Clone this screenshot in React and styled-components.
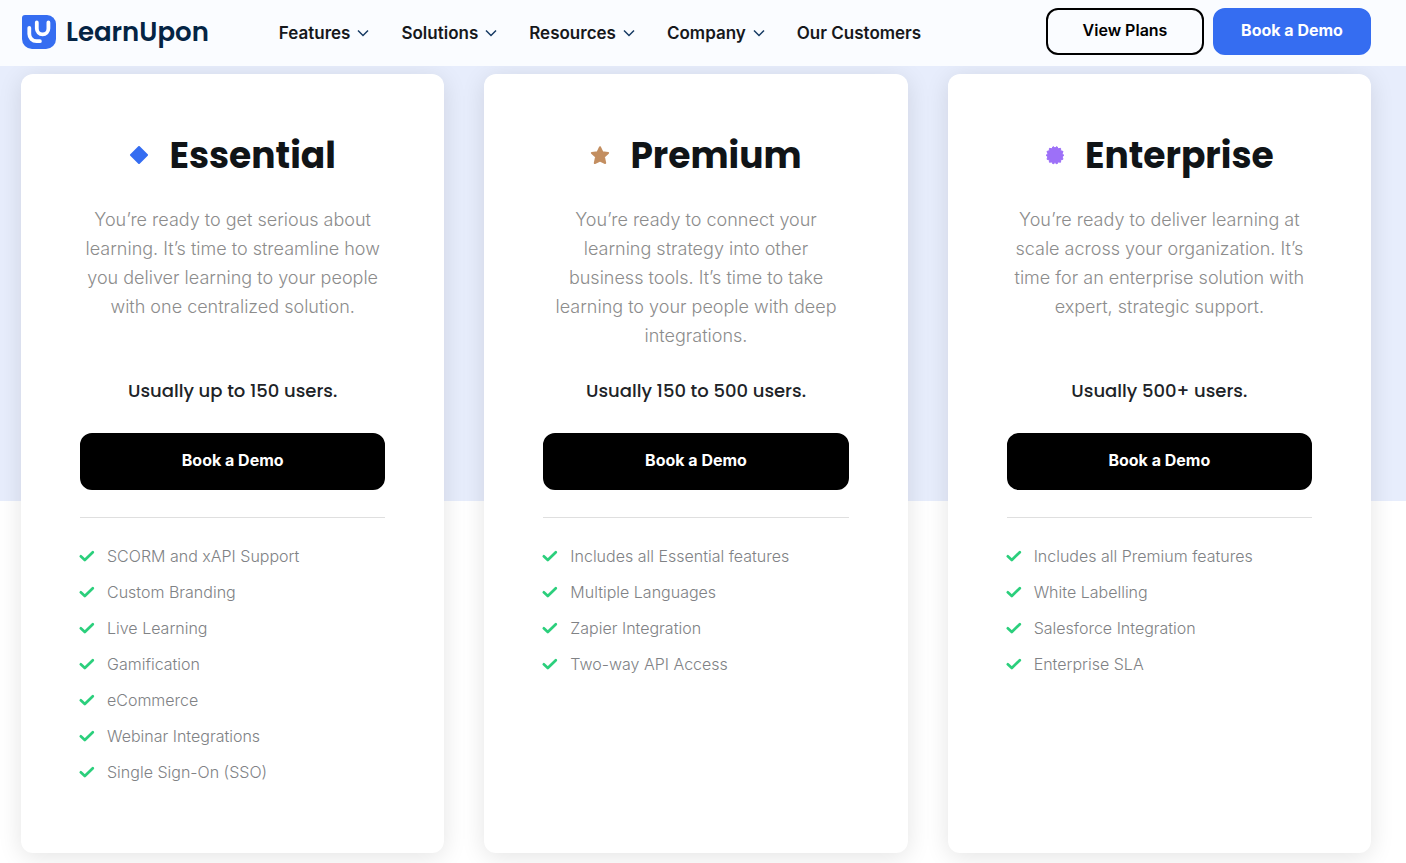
import React from 'react';
import styled, {createGlobalStyle} from 'styled-components';

const GlobalStyle = createGlobalStyle`
  *, *::before, *::after {
    box-sizing: border-box;
  }
  body {
    margin: 0;
    background: #fff;
    color: #16181b;
    font-family: Inter, 'Liberation Sans', sans-serif;
  }
`;

const Header = styled.header`
  display: flex;
  align-items: center;
  padding: 8px 35px 11px 21px;
  background: #fafcff;
`;

const Logo = styled.a`
  display: flex;
  align-items: center;
  gap: 9px;
  color: #042444;
  font-family: Poppins, Inter, sans-serif;
  font-size: 26px;
  font-weight: 600;
  line-height: 36px;
  text-decoration: none;
`;

const Nav = styled.nav`
  display: flex;
  flex: 1;
  gap: 32px;
  padding-top: 3px;
  margin-left: 70px;
`;

const NavItem = styled.a`
  display: flex;
  align-items: center;
  gap: 7px;
  color: #16181b;
  font-size: 17px;
  font-weight: 600;
  line-height: 24px;
  text-decoration: none;
`;

const Actions = styled.div`
  display: flex;
  gap: 9px;
`;

const Button = styled.button`
  width: ${(props) => (props.$block ? '100%' : '158px')};
  height: ${(props) => (props.$block ? '57px' : '47px')};
  padding: 0 0 4px;
  border: 2px solid ${(props) => (props.$outline ? '#000' : props.$color)};
  border-radius: 12px;
  background: ${(props) => (props.$outline ? 'transparent' : props.$color)};
  color: ${(props) => (props.$outline ? '#000' : '#fff')};
  font-family: inherit;
  font-size: 16px;
  font-weight: ${(props) => (props.$outline ? 600 : 700)};
  cursor: pointer;
`;

const Plans = styled.main`
  display: grid;
  grid-template-columns: repeat(3, 1fr);
  gap: 40px;
  padding: 8px 35px 10px 21px;
  background: linear-gradient(#e7edfc 435px, #fff 435px);
  overflow: hidden;
`;

const Card = styled.section`
  padding: 57px 59px 69px;
  border-radius: 12px;
  background: #fff;
  box-shadow: 0 4px 24px rgba(0, 0, 0, 0.11);
  text-align: center;
`;

const Title = styled.h2`
  display: flex;
  align-items: center;
  justify-content: center;
  gap: 20px;
  margin: 0;
  color: #101417;
  font-family: Poppins, Inter, sans-serif;
  font-size: 36px;
  font-weight: 700;
  line-height: 50px;
`;

const Description = styled.p`
  min-height: 145px;
  margin: 24px 0 26px;
  padding: 0 4px;
  color: #8c8c8c;
  font-size: 18px;
  font-weight: 300;
  line-height: 29px;
`;

const Users = styled.p`
  margin: 0 0 28px;
  color: #202327;
  font-family: Poppins, Inter, sans-serif;
  font-size: 18px;
  font-weight: 500;
  line-height: 29px;
`;

const Features = styled.ul`
  display: grid;
  gap: 12px;
  margin: 27px 0 0;
  padding: 26px 0 0;
  border-top: 1px solid #dfdfdf;
  list-style: none;
`;

const Feature = styled.li`
  display: flex;
  align-items: center;
  gap: 12px;
  color: #808285;
  font-size: 16px;
  font-weight: 300;
  line-height: 24px;
  text-align: left;
`;

const LogoMark = () => (
  <svg width="36" height="36" viewBox="0 0 36 36" fill="none" aria-hidden="true">
    <path
      d="M4 1H26a9 9 0 0 1 9 9v15a10 10 0 0 1-10 10h-14a10 10 0 0 1-10-10V4a3 3 0 0 1 3-3Z"
      fill="#356df1"
    />
    <path
      d="M15.8 8.5v6a5.8 5.8 0 0 0 11.6 0v-6M8.3 13.8v6.2a7.2 7.2 0 0 0 7.2 7.2h3.4"
      stroke="#fff"
      strokeWidth="3.8"
      strokeLinecap="round"
    />
  </svg>
);

const Chevron = () => (
  <svg width="12" height="8" viewBox="0 0 12 8" fill="none" aria-hidden="true">
    <path d="M1 1.5l5 5 5-5" stroke="#163a63" strokeWidth="1.5" />
  </svg>
);

const Check = () => (
  <svg width="15" height="12" viewBox="0 0 15 12" fill="none" overflow="visible" aria-hidden="true">
    <path
      d="M.8 6.3l4 3.7 8-7.8"
      stroke="#2bcf7c"
      strokeWidth="2.7"
      strokeLinecap="round"
      strokeLinejoin="round"
    />
  </svg>
);

const Diamond = () => (
  <svg width="20" height="20" viewBox="0 0 20 20" aria-hidden="true">
    <path
      d="M10 1L18 9 10 17 2 9Z"
      fill="#356df1"
      stroke="#356df1"
      strokeWidth="2"
      strokeLinejoin="round"
    />
  </svg>
);

const Star = () => (
  <svg width="20" height="20" viewBox="0 0 20 20" aria-hidden="true">
    <path
      d="M10 1.2l2.4 5 5.7.7-4.2 3.8 1.3 6.3-5.2-2.4-5.2 2.4 1.3-6.3L1.9 6.9 7.6 6.2Z"
      fill="#c38e60"
      stroke="#c38e60"
      strokeWidth="2"
      strokeLinejoin="round"
    />
  </svg>
);

// 14 teeth, alternating between the outer and inner radius
const burstPoints = Array.from({length: 28}, (_, i) => {
  const angle = (Math.PI * i) / 14 + Math.PI / 14;
  const radius = i % 2 ? 7.3 : 8.9;
  return `${10 + radius * Math.sin(angle)},${9.3 - radius * Math.cos(angle)}`;
}).join(' ');

const Burst = () => (
  <svg width="20" height="20" viewBox="0 0 20 20" aria-hidden="true">
    <polygon
      points={burstPoints}
      fill="#9d70f8"
      stroke="#9d70f8"
      strokeLinejoin="round"
    />
  </svg>
);

const links = [
  {label: 'Features', menu: true},
  {label: 'Solutions', menu: true},
  {label: 'Resources', menu: true},
  {label: 'Company', menu: true},
  {label: 'Our Customers'},
];

const plans = [
  {
    name: 'Essential',
    Icon: Diamond,
    description:
      'You’re ready to get serious about learning. It’s time to streamline how you deliver learning to your people with one centralized solution.',
    users: 'Usually up to 150 users.',
    features: [
      'SCORM and xAPI Support',
      'Custom Branding',
      'Live Learning',
      'Gamification',
      'eCommerce',
      'Webinar Integrations',
      'Single Sign-On (SSO)',
    ],
  },
  {
    name: 'Premium',
    Icon: Star,
    description:
      'You’re ready to connect your learning strategy into other business tools. It’s time to take learning to your people with deep integrations.',
    users: 'Usually 150 to 500 users.',
    features: [
      'Includes all Essential features',
      'Multiple Languages',
      'Zapier Integration',
      'Two-way API Access',
    ],
  },
  {
    name: 'Enterprise',
    Icon: Burst,
    description:
      'You’re ready to deliver learning at scale across your organization. It’s time for an enterprise solution with expert, strategic support.',
    users: 'Usually 500+ users.',
    features: [
      'Includes all Premium features',
      'White Labelling',
      'Salesforce Integration',
      'Enterprise SLA',
    ],
  },
];

const Plan = ({name, Icon, description, users, features}) => {
  return (
    <Card>
      <Title>
        <Icon />
        {name}
      </Title>
      <Description>{description}</Description>
      <Users>{users}</Users>
      <Button $block $color="#000">
        Book a Demo
      </Button>
      <Features>
        {features.map((feature) => (
          <Feature key={feature}>
            <Check />
            {feature}
          </Feature>
        ))}
      </Features>
    </Card>
  );
};

const App = () => {
  return (
    <>
      <GlobalStyle />
      <Header>
        <Logo href="#">
          <LogoMark />
          LearnUpon
        </Logo>
        <Nav>
          {links.map(({label, menu}) => (
            <NavItem key={label} href="#">
              {label}
              {menu && <Chevron />}
            </NavItem>
          ))}
        </Nav>
        <Actions>
          <Button $outline>View Plans</Button>
          <Button $color="#356df1">Book a Demo</Button>
        </Actions>
      </Header>
      <Plans>
        {plans.map((plan) => (
          <Plan key={plan.name} {...plan} />
        ))}
      </Plans>
    </>
  );
};

export default App;
